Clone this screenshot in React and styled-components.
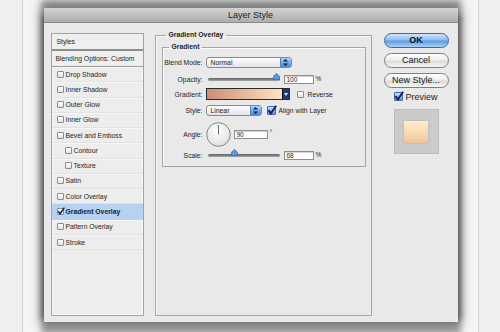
import styled, { createGlobalStyle } from "styled-components";

const GlobalStyle = createGlobalStyle`
  html, body { margin: 0; padding: 0; }
  body {
    width: 500px;
    height: 332px;
    overflow: hidden;
    background: #efefef;
    font-family: "Liberation Sans", Arial, sans-serif;
    color: #1d1d1d;
  }
`;

const Page = styled.div`
  width: 500px;
  height: 332px;
  padding-left: 22px;
  box-sizing: border-box;
`;

const Frame = styled.div`
  width: 457px;
  height: 100%;
  box-sizing: border-box;
  border-left: 1px solid #d4d4d4;
  border-right: 1px solid #d4d4d4;
  background: #f6f6f6;
  display: flex;
  justify-content: center;
  padding-top: 8px;
`;

const Dialog = styled.div`
  width: 414px;
  height: 314px;
  display: flex;
  flex-direction: column;
  background: #e9e9e9;
  box-shadow: 0 -5px 6px 3px rgba(0, 0, 0, 0.36), 0 9px 6px 3px rgba(0, 0, 0, 0.34),
    0 0 14px 3px rgba(0, 0, 0, 0.28);
`;

const TitleBar = styled.div`
  height: 15px;
  box-sizing: border-box;
  background: linear-gradient(#d3d3d3, #aeaeae);
  border-bottom: 1px solid #8a8a8a;
  text-align: center;
  font-size: 9px;
  line-height: 14px;
  color: #222;
`;

const Body = styled.div`
  flex: 1;
  display: flex;
  padding: 10px 7px 6px 7px;
`;

const LeftPanel = styled.div`
  width: 93px;
  box-sizing: border-box;
  border: 1px solid #a2a2a2;
  box-shadow: inset 0 0 0 1px #f8f8f8;
  background: #ededed;
  display: flex;
  flex-direction: column;
`;

const PanelHead = styled.div`
  height: 17px;
  box-sizing: border-box;
  padding-left: 5px;
  font-size: 6.8px;
  line-height: 15px;
  border-bottom: 2px solid #8e8e8e;
  background: #efefef;
`;

const BlendRow = styled.div`
  height: 16px;
  box-sizing: border-box;
  padding-left: 4px;
  font-size: 6.8px;
  line-height: 15px;
  border-bottom: 1px solid #9c9c9c;
  background: #efefef;
`;

const Item = styled.div`
  height: 15.27px;
  box-sizing: border-box;
  display: flex;
  align-items: center;
  gap: 2px;
  padding-left: ${(p) => (p.$indent ? 13 : 5)}px;
  font-size: 6.8px;
  font-weight: ${(p) => (p.$selected ? 700 : 400)};
  background: ${(p) => (p.$selected ? "#b5d2f3" : "transparent")};
  border-bottom: 1px solid ${(p) => (p.$selected ? "#b5d2f3" : "#e2e2e2")};
  box-shadow: ${(p) => (p.$selected ? "none" : "inset 0 1px 0 #f7f7f7")};
`;

const Box = styled.span`
  display: block;
  width: ${(p) => p.$size}px;
  height: ${(p) => p.$size}px;
  box-sizing: border-box;
  flex: none;
  position: relative;
  margin-left: ${(p) => p.$ml || 0}px;
  border: 1px solid ${(p) => (p.$blue ? "#3d6bb0" : "#8c8c8c")};
  border-radius: 1px;
  background: ${(p) =>
    p.$blue ? "linear-gradient(#c7e0f9, #5a98e0)" : "linear-gradient(#ffffff, #e3e3e3)"};
  svg {
    position: absolute;
    left: -1px;
    top: -2px;
  }
`;

function Checkbox({ size = 7, checked, blue, ml }) {
  return (
    <Box $size={size} $blue={blue} $ml={ml}>
      {checked && (
        <svg width={size + 1} height={size + 1} viewBox="0 0 10 10">
          <path d="M1.4 5.2 L3.9 8.4 L9.2 0.8" fill="none" stroke="#13205a" strokeWidth="1.9" />
        </svg>
      )}
    </Box>
  );
}

const Fieldset = styled.fieldset`
  margin: ${(p) => (p.$inner ? "4px 0 0 0" : "-2px 0 0 11px")};
  padding: ${(p) => (p.$inner ? "0 0 6px 0" : "0 5px 0 6px")};
  width: ${(p) => (p.$inner ? "auto" : "217px")};
  box-sizing: border-box;
  min-width: 0;
  border: 1px solid #a6a6a6;
  box-shadow: inset 1px 1px 0 #fbfbfb;
  display: flex;
  flex-direction: column;
`;

const Legend = styled.legend`
  font-size: 6.8px;
  font-weight: 700;
  line-height: 8px;
  padding: 0 3px;
  margin-left: ${(p) => p.$ml}px;
`;

const Row = styled.div`
  display: flex;
  align-items: center;
  height: ${(p) => p.$h}px;
  margin-top: ${(p) => p.$mt}px;
  font-size: 6.8px;
`;

const Label = styled.span`
  width: 43px;
  flex: none;
  text-align: right;
  padding-right: 3px;
  box-sizing: border-box;
`;

const SelectBox = styled.div`
  width: ${(p) => p.$w}px;
  height: 11px;
  box-sizing: border-box;
  display: flex;
  border: 1px solid #8a8a8a;
  border-radius: 3px;
  background: linear-gradient(#ffffff, #e4e4e4);
  overflow: hidden;
  span {
    flex: 1;
    padding-left: 4px;
    line-height: 9px;
  }
`;

const Arrows = styled.div`
  width: 10px;
  background: linear-gradient(#a9d0f7, #3f86dc);
  border-left: 1px solid #5a80b8;
  display: flex;
  align-items: center;
  justify-content: center;
`;

function Select({ w, value }) {
  return (
    <SelectBox $w={w}>
      <span>{value}</span>
      <Arrows>
        <svg width="5" height="7" viewBox="0 0 5 7">
          <path d="M2.5 0 L5 2.6 L0 2.6Z M2.5 7 L5 4.4 L0 4.4Z" fill="#10204e" />
        </svg>
      </Arrows>
    </SelectBox>
  );
}

const Track = styled.div`
  width: 72px;
  height: 3px;
  margin-left: 2px;
  position: relative;
  border-radius: 2px;
  background: linear-gradient(#5d5d5d, #a8a8a8);
  svg {
    position: absolute;
    top: -5px;
    margin-left: -3.5px;
  }
`;

function Slider({ pct }) {
  return (
    <Track>
      <svg width="7" height="7" viewBox="0 0 7 7" style={{ left: `${pct}%` }}>
        <path d="M3.5 0.3 L6.6 3.4 L6.6 6.7 L0.4 6.7 L0.4 3.4Z" fill="#5b9ae2" stroke="#2f5f9e" strokeWidth="0.7" />
      </svg>
    </Track>
  );
}

const Field = styled.div`
  width: ${(p) => p.$w}px;
  height: 9px;
  margin-left: ${(p) => p.$ml}px;
  box-sizing: border-box;
  border: 1px solid #8d8d8d;
  box-shadow: inset 0 1px 1px rgba(0, 0, 0, 0.18);
  background: #fff;
  font-size: 6.5px;
  line-height: 7px;
  padding-left: 2px;
`;

const Unit = styled.span`
  margin-left: 2px;
  font-size: 6.5px;
  position: relative;
  top: ${(p) => p.$up || 0}px;
`;

const Swatch = styled.div`
  width: 84px;
  height: 12px;
  box-sizing: border-box;
  display: flex;
  border: 1px solid #2b2b2b;
  div {
    flex: 1;
    background: linear-gradient(90deg, #c98f77, #e6b497 45%, #fde5c2);
  }
  span {
    width: 6px;
    background: #243770;
    border-left: 1px solid #111;
    display: flex;
    align-items: center;
    justify-content: center;
  }
`;

const CheckText = styled.span`
  margin-left: ${(p) => p.$ml}px;
`;

const Dial = styled.svg`
  flex: none;
`;

const RightCol = styled.div`
  width: 65px;
  margin-left: 12px;
  display: flex;
  flex-direction: column;
  align-items: center;
`;

const Button = styled.div`
  width: 65px;
  height: 15px;
  box-sizing: border-box;
  margin-bottom: 5px;
  border-radius: 8px;
  text-align: center;
  font-size: 9px;
  line-height: 13px;
  font-weight: ${(p) => (p.$primary ? 700 : 400)};
  border: 1px solid ${(p) => (p.$primary ? "#3d68a6" : "#7e7e7e")};
  background: ${(p) =>
    p.$primary
      ? "linear-gradient(#cfe5fb, #8fbdf0 45%, #5e9de6 55%, #a8d2f8)"
      : "linear-gradient(#ffffff, #eeeeee 45%, #dcdcdc 55%, #f6f6f6)"};
  color: #141414;
`;

const PreviewRow = styled.div`
  align-self: flex-start;
  margin: -2px 0 0 10px;
  display: flex;
  align-items: center;
  gap: 3px;
  font-size: 9px;
  height: 11px;
`;

const PreviewBox = styled.div`
  width: 45px;
  height: 45px;
  margin-top: 7px;
  box-sizing: border-box;
  background: #cbcbcb;
  border: 1px solid #bdbdbd;
  display: flex;
  align-items: center;
  justify-content: center;
`;

const PreviewSwatch = styled.div`
  width: 24px;
  height: 22px;
  background: linear-gradient(#fdecce, #f9dbb4 50%, #efc29b);
  box-shadow: 0 0 2px rgba(0, 0, 0, 0.18);
`;

const styles = [
  { name: "Drop Shadow" },
  { name: "Inner Shadow" },
  { name: "Outer Glow" },
  { name: "Inner Glow" },
  { name: "Bevel and Emboss" },
  { name: "Contour", indent: true },
  { name: "Texture", indent: true },
  { name: "Satin" },
  { name: "Color Overlay" },
  { name: "Gradient Overlay", checked: true },
  { name: "Pattern Overlay" },
  { name: "Stroke" },
];

export default function App() {
  return (
    <Page>
      <GlobalStyle />
      <Frame>
        <Dialog>
          <TitleBar>Layer Style</TitleBar>
          <Body>
            <LeftPanel>
              <PanelHead>Styles</PanelHead>
              <BlendRow>Blending Options: Custom</BlendRow>
              {styles.map((s) => (
                <Item key={s.name} $indent={s.indent} $selected={s.checked}>
                  <Checkbox checked={s.checked} />
                  {s.name}
                </Item>
              ))}
            </LeftPanel>

            <Fieldset>
              <Legend $ml={4}>Gradient Overlay</Legend>
              <Fieldset $inner>
                <Legend $ml={6}>Gradient</Legend>
                <Row $h={11} $mt={6}>
                  <Label>Blend Mode:</Label>
                  <Select w={86} value="Normal" />
                </Row>
                <Row $h={10} $mt={6}>
                  <Label>Opacity:</Label>
                  <Slider pct={96} />
                  <Field $w={30} $ml={4}>100</Field>
                  <Unit $up={-1}>%</Unit>
                </Row>
                <Row $h={12} $mt={4}>
                  <Label>Gradient:</Label>
                  <Swatch>
                    <div />
                    <span>
                      <svg width="4" height="3" viewBox="0 0 4 3">
                        <path d="M0 0 L4 0 L2 3Z" fill="#dfe7ff" />
                      </svg>
                    </span>
                  </Swatch>
                  <Checkbox ml={7} />
                  <CheckText $ml={4}>Reverse</CheckText>
                </Row>
                <Row $h={11} $mt={5}>
                  <Label>Style:</Label>
                  <Select w={56} value="Linear" />
                  <Checkbox size={9} checked blue ml={5} />
                  <CheckText $ml={3}>Align with Layer</CheckText>
                </Row>
                <Row $h={25} $mt={6}>
                  <Label>Angle:</Label>
                  <Dial width="25" height="25" viewBox="0 0 25 25">
                    <defs>
                      <radialGradient id="dialFill" cx="0.45" cy="0.35" r="0.7">
                        <stop offset="0" stopColor="#ffffff" />
                        <stop offset="1" stopColor="#dedede" />
                      </radialGradient>
                    </defs>
                    <circle cx="12.5" cy="12.5" r="11.8" fill="url(#dialFill)" stroke="#7c7c7c" strokeWidth="0.9" />
                    <line x1="12.5" y1="12.5" x2="12.5" y2="3" stroke="#444" strokeWidth="0.8" />
                  </Dial>
                  <Field $w={34} $ml={3}>90</Field>
                  <Unit $up={-2}>°</Unit>
                </Row>
                <Row $h={9} $mt={4}>
                  <Label>Scale:</Label>
                  <Slider pct={38} />
                  <Field $w={30} $ml={4}>68</Field>
                  <Unit $up={-1}>%</Unit>
                </Row>
              </Fieldset>
            </Fieldset>

            <RightCol>
              <Button $primary>OK</Button>
              <Button>Cancel</Button>
              <Button>New Style...</Button>
              <PreviewRow>
                <Checkbox size={9} checked blue />
                Preview
              </PreviewRow>
              <PreviewBox>
                <PreviewSwatch />
              </PreviewBox>
            </RightCol>
          </Body>
        </Dialog>
      </Frame>
    </Page>
  );
}
